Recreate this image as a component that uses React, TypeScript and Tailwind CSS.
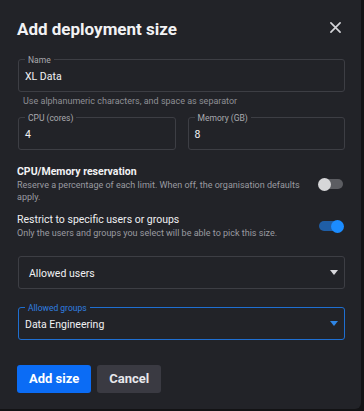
import React, { useState } from "react";

function OutlinedField({
  label,
  value,
  focused,
  select,
  className,
}: {
  label?: string;
  value: string;
  focused?: boolean;
  select?: boolean;
  className?: string;
}) {
  return (
    <div
      className={`relative h-[33px] rounded-[3px] border flex items-center ${
        focused ? "border-[#1f6fd1]" : "border-[#3d3e44]"
      } ${className ?? ""}`}
    >
      {label && (
        <span
          className={`absolute left-[6px] top-0 -translate-y-1/2 bg-[#222328] px-[3px] text-[8.5px] leading-[10px] ${
            focused ? "text-[#2f7fe0]" : "text-[#a9aaaf]"
          }`}
        >
          {label}
        </span>
      )}
      <span
        className={`flex-1 pt-[3px] text-[10.5px] text-[#f1f1f3] ${
          label ? "pl-[6px]" : "pl-[10px] pt-[1px]"
        }`}
      >
        {value}
      </span>
      {select && (
        <svg width="8" height="5" viewBox="0 0 8 5" className="mr-[6px]">
          <path d="M0 0 L8 0 L4 5 Z" fill={focused ? "#2f86e6" : "#d8d8dc"} />
        </svg>
      )}
    </div>
  );
}

function Toggle({ on, onClick }: { on: boolean; onClick: () => void }) {
  return (
    <button
      onClick={onClick}
      className={`relative flex h-[10px] w-[24px] items-center rounded-full ${
        on ? "bg-[#1f5ea6]" : "bg-[#5c5d62]"
      }`}
    >
      <span
        className={`absolute h-[13px] w-[13px] rounded-full ${
          on ? "right-[-1px] bg-[#1b8cff]" : "left-[-1px] bg-[#d6d6d8]"
        }`}
      />
    </button>
  );
}

export default function App() {
  const [reserve, setReserve] = useState(false);
  const [restrict, setRestrict] = useState(true);

  return (
    <div
      className="h-[411px] w-[364px] bg-[#131315]"
      style={{ fontFamily: "Roboto, 'Liberation Sans', sans-serif" }}
    >
      <div className="h-[409px] w-[361px] rounded-br-[6px] bg-[#222328] px-[17px] pt-[16px]">
        {/* Header */}
        <div className="flex h-[26px] items-center justify-between">
          <h1 className="text-[17px] font-bold leading-[26px] text-[#f2f2f4]">
            Add deployment size
          </h1>
          <svg
            width="11"
            height="11"
            viewBox="0 0 12 12"
            className="mb-[3px] mr-[3px]"
          >
            <path
              d="M1 1 L11 11 M11 1 L1 11"
              stroke="#d4d4d8"
              strokeWidth="1.8"
              strokeLinecap="round"
            />
          </svg>
        </div>

        {/* Name */}
        <OutlinedField label="Name" value="XL Data" className="mt-[17px] mr-[-1px] ml-[1px]" />
        <p className="mt-[3px] pl-[6px] text-[9px] leading-[12px] text-[#8e8f95]">
          Use alphanumeric characters, and space as separator
        </p>

        {/* CPU / Memory */}
        <div className="mt-[10px] ml-[1px] mr-[-1px] grid grid-cols-2 gap-[12px]">
          <OutlinedField label="CPU (cores)" value="4" />
          <OutlinedField label="Memory (GB)" value="8" />
        </div>

        {/* Reservation */}
        <div className="mt-[15px] flex items-center justify-between">
          <div className="w-[285px]">
            <div className="text-[10.5px] font-bold leading-[14px] text-[#f2f2f4]">
              CPU/Memory reservation
            </div>
            <div className="text-[9px] leading-[12px] text-[#9a9ba1]">
              Reserve a percentage of each limit. When off, the organisation
              defaults apply.
            </div>
          </div>
          <div className="mr-[1px]">
            <Toggle on={reserve} onClick={() => setReserve(!reserve)} />
          </div>
        </div>

        {/* Restrict */}
        <div className="mt-[10px] flex items-center justify-between">
          <div>
            <div className="text-[10.5px] leading-[14px] text-[#eeeef0]">
              Restrict to specific users or groups
            </div>
            <div className="text-[9px] leading-[12px] text-[#9a9ba1]">
              Only the users and groups you select will be able to pick this
              size.
            </div>
          </div>
          <div className="mr-[1px]">
            <Toggle on={restrict} onClick={() => setRestrict(!restrict)} />
          </div>
        </div>

        {/* Allowed users / groups */}
        <OutlinedField
          value="Allowed users"
          select
          className="mt-[17px] ml-[1px] mr-[-1px]"
        />
        <OutlinedField
          label="Allowed groups"
          value="Data Engineering"
          select
          focused
          className="mt-[18px] ml-[1px] mr-[-1px]"
        />

        {/* Actions */}
        <div className="mt-[25px] flex gap-[6px]">
          <button className="h-[28px] rounded-[3px] bg-[#0b6cf5] px-[12px] text-[13px] font-bold text-white">
            Add size
          </button>
          <button className="h-[28px] rounded-[3px] bg-[#3a3a42] px-[12px] text-[13px] font-bold text-[#e8e8ec]">
            Cancel
          </button>
        </div>
      </div>
    </div>
  );
}
